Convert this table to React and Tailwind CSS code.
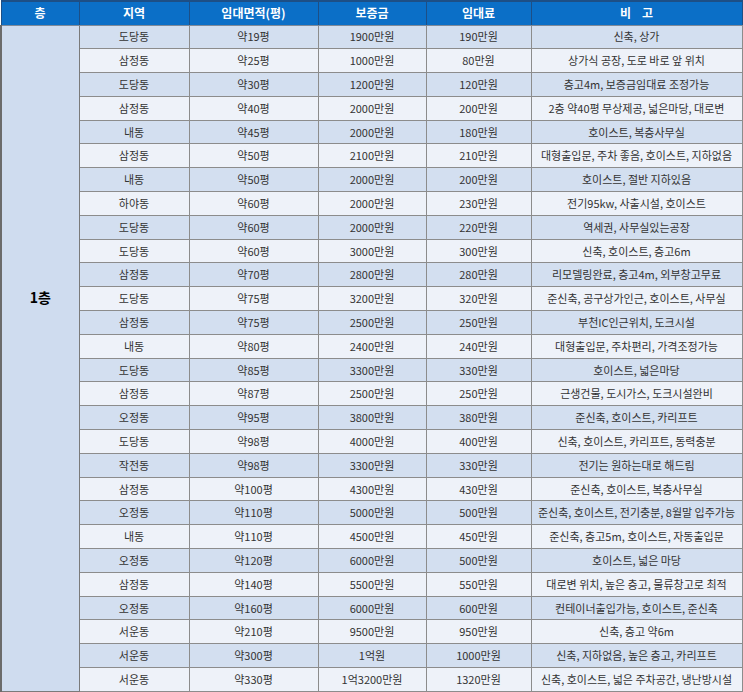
const rows = [
  ['도당동', '약19평', '1900만원', '190만원', '신축, 상가'],
  ['삼정동', '약25평', '1000만원', '80만원', '상가식 공장, 도로 바로 앞 위치'],
  ['도당동', '약30평', '1200만원', '120만원', '층고4m, 보증금임대료 조정가능'],
  ['삼정동', '약40평', '2000만원', '200만원', '2층 약40평 무상제공, 넓은마당, 대로변'],
  ['내동', '약45평', '2000만원', '180만원', '호이스트, 복층사무실'],
  ['삼정동', '약50평', '2100만원', '210만원', '대형출입문, 주차 좋음, 호이스트, 지하없음'],
  ['내동', '약50평', '2000만원', '200만원', '호이스트, 절반 지하있음'],
  ['하야동', '약60평', '2000만원', '230만원', '전기95kw, 사출시설, 호이스트'],
  ['도당동', '약60평', '2000만원', '220만원', '역세권, 사무실있는공장'],
  ['도당동', '약60평', '3000만원', '300만원', '신축, 호이스트, 층고6m'],
  ['삼정동', '약70평', '2800만원', '280만원', '리모델링완료, 층고4m, 외부창고무료'],
  ['도당동', '약75평', '3200만원', '320만원', '준신축, 공구상가인근, 호이스트, 사무실'],
  ['삼정동', '약75평', '2500만원', '250만원', '부천IC인근위치, 도크시설'],
  ['내동', '약80평', '2400만원', '240만원', '대형출입문, 주차편리, 가격조정가능'],
  ['도당동', '약85평', '3300만원', '330만원', '호이스트, 넓은마당'],
  ['삼정동', '약87평', '2500만원', '250만원', '근생건물, 도시가스, 도크시설완비'],
  ['오정동', '약95평', '3800만원', '380만원', '준신축, 호이스트, 카리프트'],
  ['도당동', '약98평', '4000만원', '400만원', '신축, 호이스트, 카리프트, 동력충분'],
  ['작전동', '약98평', '3300만원', '330만원', '전기는 원하는대로 해드림'],
  ['삼정동', '약100평', '4300만원', '430만원', '준신축, 호이스트, 복층사무실'],
  ['오정동', '약110평', '5000만원', '500만원', '준신축, 호이스트, 전기충분, 8월말 입주가능'],
  ['내동', '약110평', '4500만원', '450만원', '준신축, 층고5m, 호이스트, 자동출입문'],
  ['오정동', '약120평', '6000만원', '500만원', '호이스트, 넓은 마당'],
  ['삼정동', '약140평', '5500만원', '550만원', '대로변 위치, 높은 층고, 물류창고로 최적'],
  ['오정동', '약160평', '6000만원', '600만원', '컨테이너출입가능, 호이스트, 준신축'],
  ['서운동', '약210평', '9500만원', '950만원', '신축, 층고 약6m'],
  ['서운동', '약300평', '1억원', '1000만원', '신축, 지하없음, 높은 층고, 카리프트'],
  ['서운동', '약330평', '1억3200만원', '1320만원', '신축, 호이스트, 넓은 주차공간, 냉난방시설'],
];

const headers = ['층', '지역', '임대면적(평)', '보증금', '임대료', '비\u00a0\u00a0\u00a0\u00a0고'];

export default function App() {
  return (
    <div className="w-[743px] h-[692px] bg-white overflow-hidden" style={{ fontFamily: '"Noto Sans CJK KR", "Noto Sans", sans-serif' }}>
      <table className="table-fixed border-collapse w-[741px] text-[11px] text-[#333]">
        <colgroup>
          <col className="w-[78px]" />
          <col className="w-[110px]" />
          <col className="w-[129px]" />
          <col className="w-[108px]" />
          <col className="w-[105px]" />
          <col className="w-[211px]" />
        </colgroup>
        <thead>
          <tr className="h-[24px] bg-[#0b6fc7] text-white">
            {headers.map((h) => (
              <th
                key={h}
                className="border-x border-x-[#1d4f86] border-t-2 border-t-[#1d4f86] border-b border-b-[#7f8a99] text-[12px] font-bold leading-none"
              >
                {h}
              </th>
            ))}
          </tr>
        </thead>
        <tbody>
          {rows.map((r, i) => (
            <tr key={i} className={`h-[23.8px] ${i % 2 === 0 ? 'bg-[#d3dff0]' : 'bg-[#eef2f9]'}`}>
              {i === 0 && (
                <td
                  rowSpan={rows.length}
                  className="align-top bg-[#cfdcef] border border-[#7a7a7a] border-l-2 border-l-[#6b6b6b] pt-[261px] text-center text-[14px] font-bold text-black"
                >
                  1층
                </td>
              )}
              {r.map((c, j) => (
                <td key={j} className="border border-[#8c8c8c] text-center leading-none p-0 whitespace-nowrap">
                  {c}
                </td>
              ))}
            </tr>
          ))}
        </tbody>
      </table>
    </div>
  );
}
